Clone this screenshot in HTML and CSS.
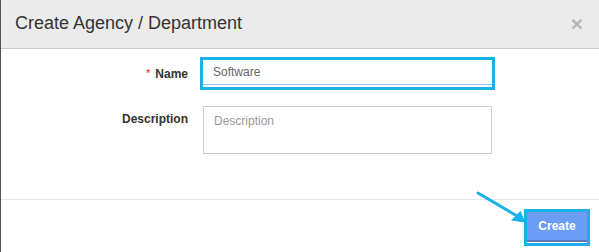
FILE: index.html
```html
<!DOCTYPE html>
<html>
<head>
  <title>Create Agency / Department</title>
  <link rel="stylesheet" href="styles.css">
</head>
<body>
  <div class="modal">
    <div class="modal-header">
      <h4 class="modal-title">Create Agency / Department</h4>
      <span class="close">&times;</span>
    </div>
    <div class="modal-body">
      <form class="form">
        <label class="label" for="name"><span class="req">*</span>Name</label>
        <div class="mark mark-input">
          <input id="name" class="input" type="text" value="Software">
        </div>
        <label class="label" for="desc">Description</label>
        <textarea id="desc" class="textarea" placeholder="Description"></textarea>
      </form>
    </div>
    <div class="modal-footer">
      <div class="mark mark-btn">
        <button class="btn-create" type="button">Create</button>
      </div>
    </div>
    <svg class="arrow" width="599" height="252" viewBox="0 0 599 252">
      <line x1="478" y1="193" x2="517" y2="216" stroke="#1cb0e8" stroke-width="3" stroke-linecap="round"/>
      <polygon points="525.5,222.5 520.5,211 511,220.5" fill="#1cb0e8"/>
    </svg>
  </div>
</body>
</html>
```

FILE: styles.css
```css
body {
  margin: 0;
  font-family: "Liberation Sans", Arial, sans-serif;
  background: #fff;
}

.modal {
  position: relative;
  width: 599px;
  height: 252px;
  box-sizing: border-box;
  border-left: 1px solid #555;
  background: #fff;
}

.modal-header {
  height: 49px;
  box-sizing: border-box;
  background: #ebebeb;
  border-bottom: 1px solid #cdcdcd;
  display: flex;
  align-items: center;
  justify-content: space-between;
  padding: 0 16px 1px 14px;
}

.modal-title {
  margin: 0;
  font-size: 18px;
  font-weight: normal;
  color: #333;
}

.close {
  font-size: 21px;
  font-weight: bold;
  color: #b5b5b5;
  line-height: 1;
}

.modal-body {
  height: 150px;
  box-sizing: border-box;
  padding-top: 11px;
}

.form {
  margin: 0;
  display: grid;
  grid-template-columns: 187px 289px;
  column-gap: 15px;
  row-gap: 19px;
  align-items: start;
}

.label {
  text-align: right;
  font-size: 12px;
  font-weight: bold;
  color: #333;
  line-height: 16px;
  padding-top: 5px;
}

.req {
  color: #e22;
  font-weight: normal;
  font-size: 11px;
  vertical-align: 1px;
  margin-right: 5px;
}

.mark {
  outline: 3px solid #1cb0e8;
  background: #fff;
}

.mark-input {
  padding-bottom: 2px;
}

.input {
  display: block;
  width: 100%;
  height: 25px;
  box-sizing: border-box;
  border: 0;
  border-bottom: 1px solid #8dc3ef;
  padding: 0 10px 1px;
  font-family: inherit;
  font-size: 12px;
  color: #666;
  outline: none;
}

.textarea {
  display: block;
  width: 289px;
  height: 48px;
  box-sizing: border-box;
  border: 1px solid #ccc;
  padding: 7px 10px;
  font-family: inherit;
  font-size: 12px;
  line-height: 15px;
  resize: none;
  outline: none;
}

.textarea::placeholder {
  color: #999;
}

.modal-footer {
  border-top: 1px solid #e5e5e5;
  padding: 12px 12px 0 0;
  display: flex;
  justify-content: flex-end;
}

.mark-btn {
  padding-bottom: 1px;
}

.btn-create {
  display: block;
  width: 60px;
  height: 30px;
  border: 0;
  border-bottom: 2px solid #5d78b6;
  background: #6b9df5;
  color: #fff;
  font-family: inherit;
  font-size: 12px;
  font-weight: bold;
  padding: 0;
}

.arrow {
  position: absolute;
  left: -1px;
  top: 0;
  pointer-events: none;
}
```
